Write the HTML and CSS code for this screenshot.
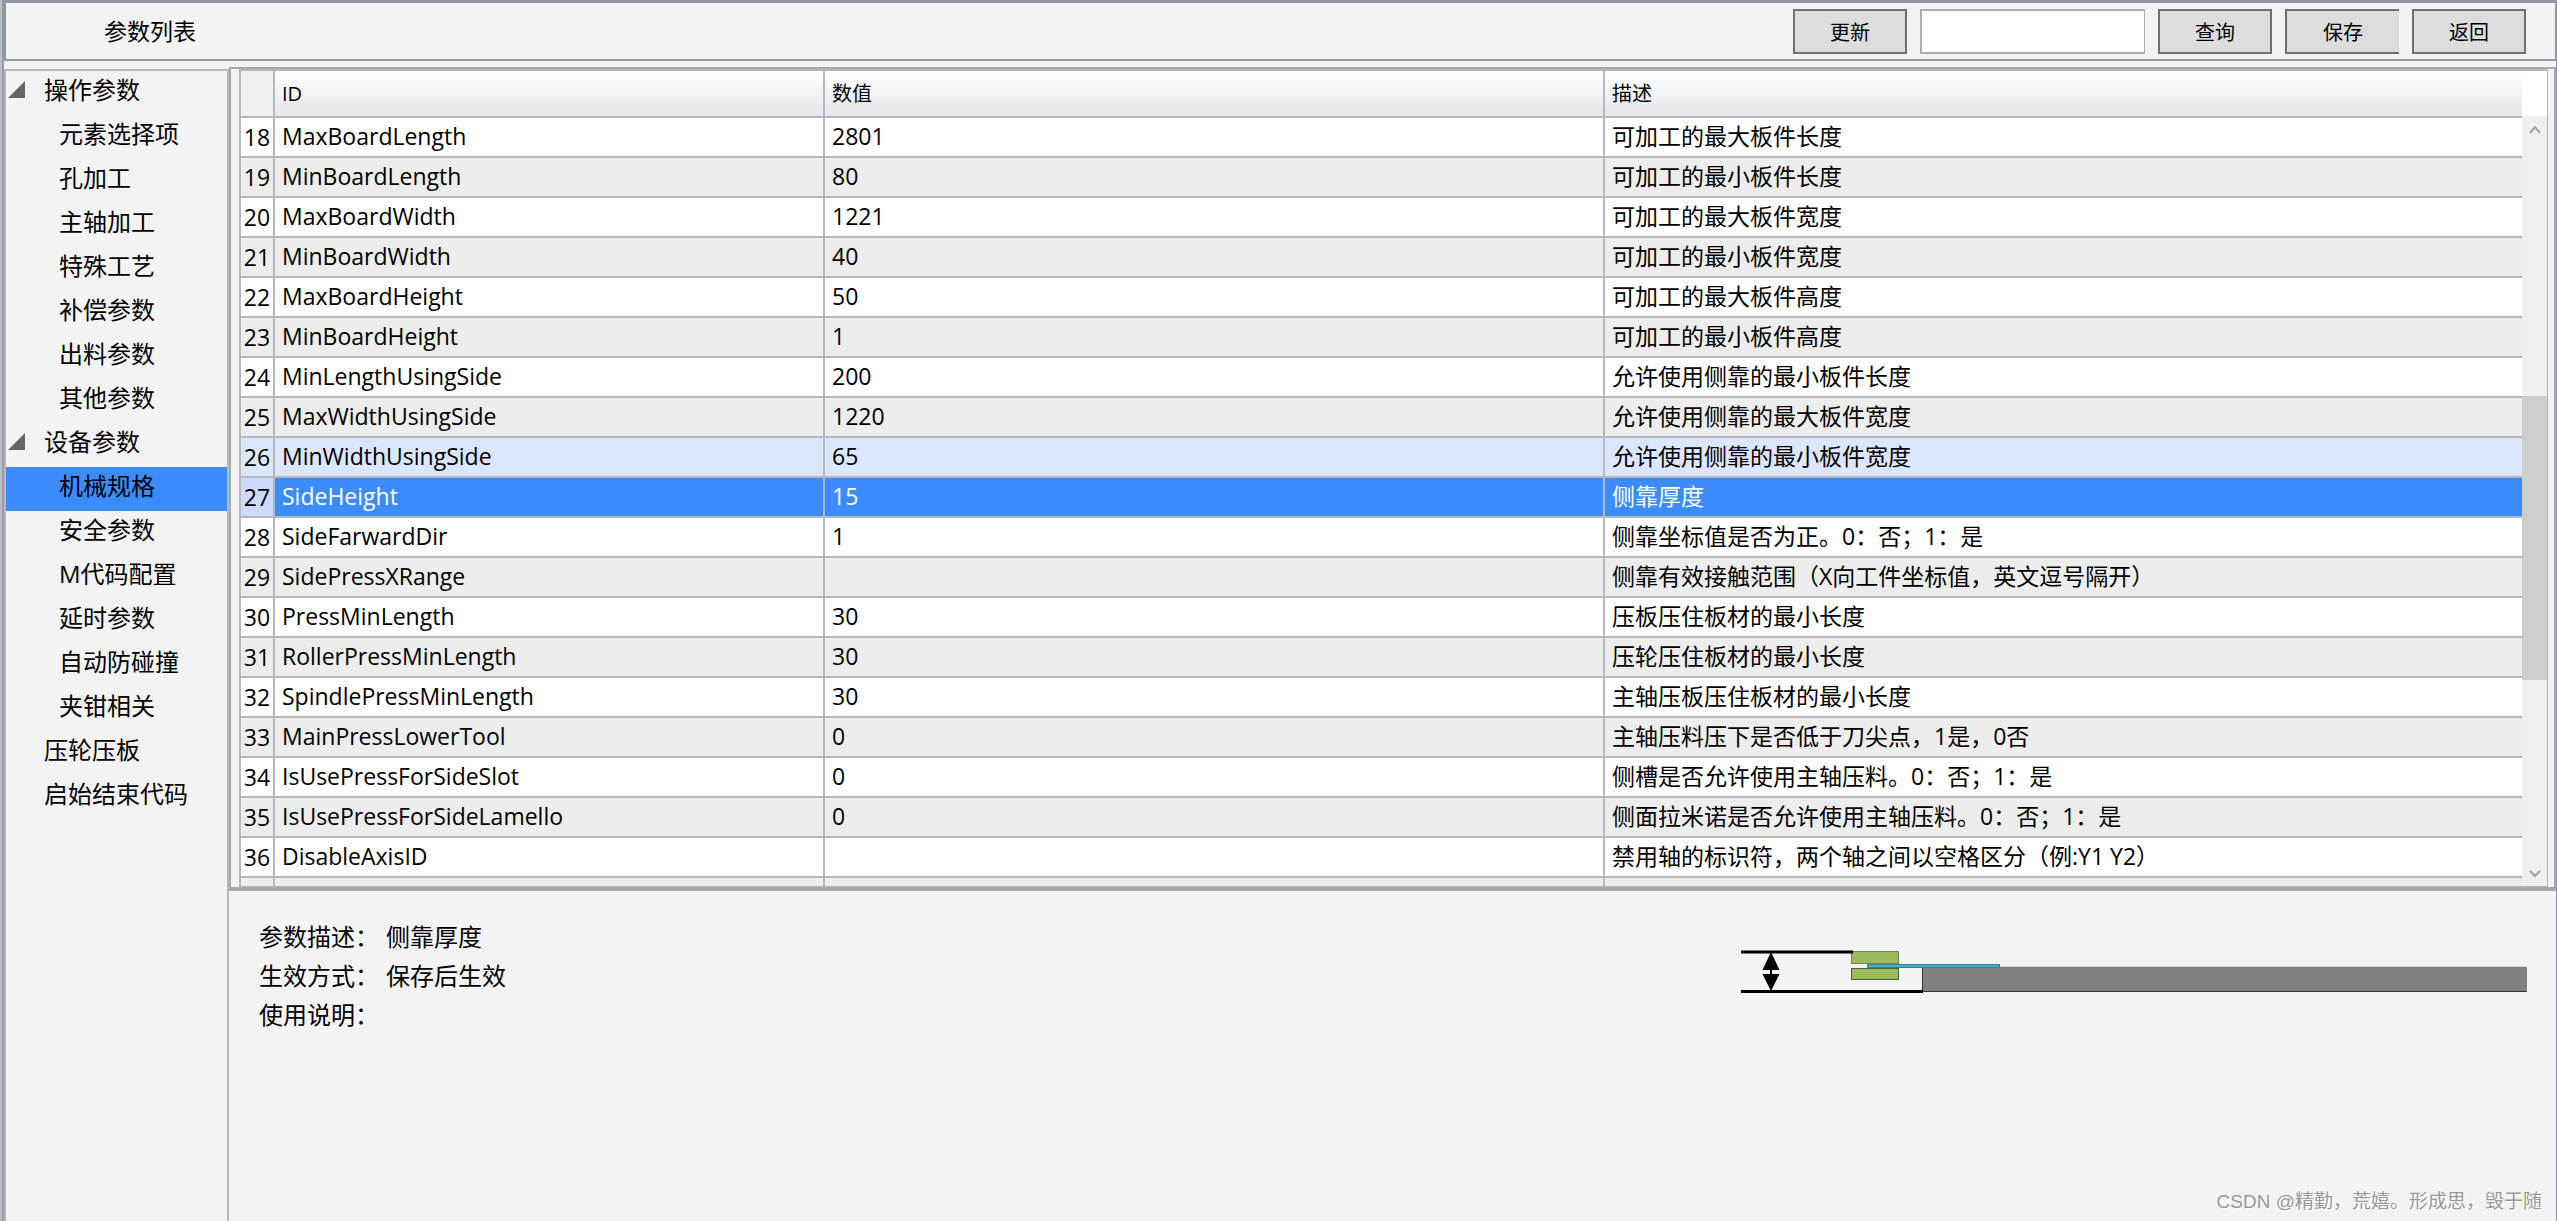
FILE: index.html
```html
<!DOCTYPE html>
<html lang="zh-CN">
<head>
<meta charset="utf-8">
<title>参数列表</title>
<link rel="stylesheet" href="styles.css">
</head>
<body>
<div class="app">
  <header class="titlebar">
    <h1 class="title">参数列表</h1>
    <div class="tools">
      <button class="btn" type="button">更新</button>
      <input class="search" type="text" aria-label="查询内容">
      <button class="btn" type="button">查询</button>
      <button class="btn btn-save" type="button">保存</button>
      <button class="btn" type="button">返回</button>
    </div>
  </header>
  <div class="body">
    <nav class="sidebar" aria-label="参数分类">
      <ul class="tree">
        <li><a class="node open" href="#">操作参数</a>
          <ul class="tree">
            <li><a class="node child" href="#">元素选择项</a></li>
            <li><a class="node child" href="#">孔加工</a></li>
            <li><a class="node child" href="#">主轴加工</a></li>
            <li><a class="node child" href="#">特殊工艺</a></li>
            <li><a class="node child" href="#">补偿参数</a></li>
            <li><a class="node child" href="#">出料参数</a></li>
            <li><a class="node child" href="#">其他参数</a></li>
          </ul>
        </li>
        <li><a class="node open" href="#">设备参数</a>
          <ul class="tree">
            <li><a class="node child current" href="#" aria-current="page">机械规格</a></li>
            <li><a class="node child" href="#">安全参数</a></li>
            <li><a class="node child" href="#">M代码配置</a></li>
            <li><a class="node child" href="#">延时参数</a></li>
            <li><a class="node child" href="#">自动防碰撞</a></li>
            <li><a class="node child" href="#">夹钳相关</a></li>
          </ul>
        </li>
        <li><a class="node" href="#">压轮压板</a></li>
        <li><a class="node" href="#">启始结束代码</a></li>
      </ul>
    </nav>
    <main class="main">
      <section class="grid-panel">
        <div class="grid">
          <div class="viewport">
            <table class="params">
              <colgroup><col class="c-num"><col class="c-id"><col class="c-value"><col class="c-desc"></colgroup>
              <thead>
                <tr><td class="corner"></td><th scope="col">ID</th><th scope="col">数值</th><th scope="col">描述</th></tr>
              </thead>
              <tbody>
                <tr><th scope="row">18</th><td>MaxBoardLength</td><td>2801</td><td>可加工的最大板件长度</td></tr>
                <tr><th scope="row">19</th><td>MinBoardLength</td><td>80</td><td>可加工的最小板件长度</td></tr>
                <tr><th scope="row">20</th><td>MaxBoardWidth</td><td>1221</td><td>可加工的最大板件宽度</td></tr>
                <tr><th scope="row">21</th><td>MinBoardWidth</td><td>40</td><td>可加工的最小板件宽度</td></tr>
                <tr><th scope="row">22</th><td>MaxBoardHeight</td><td>50</td><td>可加工的最大板件高度</td></tr>
                <tr><th scope="row">23</th><td>MinBoardHeight</td><td>1</td><td>可加工的最小板件高度</td></tr>
                <tr><th scope="row">24</th><td>MinLengthUsingSide</td><td>200</td><td>允许使用侧靠的最小板件长度</td></tr>
                <tr><th scope="row">25</th><td>MaxWidthUsingSide</td><td>1220</td><td>允许使用侧靠的最大板件宽度</td></tr>
                <tr class="hover"><th scope="row">26</th><td>MinWidthUsingSide</td><td>65</td><td>允许使用侧靠的最小板件宽度</td></tr>
                <tr class="selected"><th scope="row">27</th><td>SideHeight</td><td>15</td><td>侧靠厚度</td></tr>
                <tr><th scope="row">28</th><td>SideFarwardDir</td><td>1</td><td>侧靠坐标值是否为正。0：否；1：是</td></tr>
                <tr><th scope="row">29</th><td>SidePressXRange</td><td></td><td>侧靠有效接触范围（X向工件坐标值，英文逗号隔开）</td></tr>
                <tr><th scope="row">30</th><td>PressMinLength</td><td>30</td><td>压板压住板材的最小长度</td></tr>
                <tr><th scope="row">31</th><td>RollerPressMinLength</td><td>30</td><td>压轮压住板材的最小长度</td></tr>
                <tr><th scope="row">32</th><td>SpindlePressMinLength</td><td>30</td><td>主轴压板压住板材的最小长度</td></tr>
                <tr><th scope="row">33</th><td>MainPressLowerTool</td><td>0</td><td>主轴压料压下是否低于刀尖点，1是，0否</td></tr>
                <tr><th scope="row">34</th><td>IsUsePressForSideSlot</td><td>0</td><td>侧槽是否允许使用主轴压料。0：否；1：是</td></tr>
                <tr><th scope="row">35</th><td>IsUsePressForSideLamello</td><td>0</td><td>侧面拉米诺是否允许使用主轴压料。0：否；1：是</td></tr>
                <tr><th scope="row">36</th><td>DisableAxisID</td><td></td><td>禁用轴的标识符，两个轴之间以空格区分（例:Y1 Y2）</td></tr>
                <tr><th scope="row"></th><td></td><td></td><td></td></tr>
              </tbody>
            </table>
          </div>
          <div class="scrollbar" aria-hidden="true">
            <div class="scroll-head"></div>
            <svg class="arrow" viewBox="0 0 25 26"><path d="M8 17 L13 11 L18 17" fill="none" stroke="#a3a3a3" stroke-width="2"/></svg>
            <div class="track">
              <div class="before"></div>
              <div class="thumb"></div>
              <div class="after"></div>
            </div>
            <svg class="arrow" viewBox="0 0 25 26"><path d="M8 11 L13 16 L18 11" fill="none" stroke="#a3a3a3" stroke-width="2"/></svg>
          </div>
        </div>
      </section>
      <section class="detail">
        <dl class="info">
          <dt>参数描述：</dt><dd>侧靠厚度</dd>
          <dt>生效方式：</dt><dd>保存后生效</dd>
          <dt>使用说明：</dt><dd></dd>
        </dl>
        <svg class="diagram" viewBox="0 0 787 46" role="img" aria-label="侧靠厚度示意图">
          <rect x="181" y="19" width="605" height="25" fill="#808080"/>
          <path d="M181 18.500H786" stroke="#d3d3d3"/>
          <path d="M181.500 19V43.500H786" fill="none" stroke="#333"/>
          <rect x="110.500" y="3.500" width="47" height="12" fill="#9bbb5f" stroke="#71893f"/>
          <rect x="110.500" y="20.500" width="47" height="11" fill="#9bbb5f" stroke="#4c6030"/>
          <rect x="126.500" y="16.500" width="132" height="3" fill="#4bacc6" stroke="#31849b"/>
          <path d="M0 4H112M0 43.500H182" stroke="#000" stroke-width="3"/>
          <path d="M30 4L38.500 22H31V26H38.500L30 43L21.500 26H29V22H21.500Z" fill="#000"/>
        </svg>
      </section>
    </main>
  </div>
  <p class="watermark">CSDN @精勤，荒嬉。形成思，毁于随</p>
</div>
</body>
</html>
```
FILE: styles.css
```css
* { box-sizing: border-box; }

body {
  margin: 0;
  background: #f3f3f3;
  color: #000;
  font-family: "Open Sans", "Noto Sans CJK SC", sans-serif;
  font-size: 23px;
}

ul, dl, dd, p, h1 { margin: 0; padding: 0; }

.app {
  display: flex;
  flex-direction: column;
  height: 100vh;
  border-left: 2px solid #b9bdc4;
  border-right: 1px solid #8f97a8;
  overflow: hidden;
}

.titlebar {
  display: flex;
  align-items: center;
  justify-content: space-between;
  height: 61px;
  padding: 0 29px 0 98px;
  border: 2px solid #9198a4;
  border-top-width: 3px;
  border-right-width: 1px;
  border-left-width: 4px;
}

.title {
  font-size: 23px;
  font-weight: 400;
  line-height: 32px;
}

.tools {
  display: flex;
  gap: 13px;
}

.btn {
  width: 114px;
  height: 45px;
  padding: 0;
  border: 2px solid #707070;
  background: #ddd;
  color: #000;
  font: inherit;
  font-size: 20px;
}

.btn-save { border-right: 0; }

.search {
  width: 225px;
  height: 45px;
  padding: 0 8px;
  border: 2px solid #abadb3;
  border-right-width: 1px;
  background: #fff;
  font: inherit;
}

.body {
  flex: 1;
  display: flex;
  min-height: 0;
  border-left: 2px solid #959ca8;
}

.sidebar {
  width: 225px;
  margin-top: 8px;
  border: 2px solid #b8b8b8;
  border-bottom: 0;
}

.tree { list-style: none; }

.node {
  display: block;
  position: relative;
  height: 44px;
  padding-left: 38px;
  color: #000;
  font-size: 24px;
  line-height: 38px;
  text-decoration: none;
}

.child { padding-left: 53px; }

.current { background: #3b8cff; }

.open::before {
  content: "";
  position: absolute;
  left: 2px;
  top: 10px;
  width: 17px;
  height: 17px;
  background: #65655f;
  clip-path: polygon(100% 0, 100% 100%, 0 100%);
}

.main {
  flex: 1;
  display: grid;
  grid-template-rows: 5fr 2fr;
  min-width: 0;
  margin-top: 6px;
}

.grid-panel {
  min-height: 0;
  padding: 0 6px 0 8px;
  border: 2px solid #a9a9a9;
  border-bottom-width: 4px;
}

.grid {
  display: flex;
  height: 100%;
  border: 2px solid #b4b8bd;
  border-right-width: 1px;
  border-bottom-width: 1px;
}

.viewport {
  flex: 1;
  min-width: 0;
  overflow: hidden;
}

.params {
  width: 100%;
  border-collapse: separate;
  border-spacing: 0;
  table-layout: fixed;
  background: #fff;
}

.c-num { width: 34px; }
.c-id { width: 550px; }
.c-value { width: 780px; }

.params td,
.params th {
  height: 40px;
  padding: 0 0 2px 7px;
  border-right: 2px solid #b5b9bf;
  border-bottom: 2px solid #b5b9bf;
  font-weight: 400;
  line-height: 36px;
  text-align: left;
  white-space: nowrap;
}

.params td:last-child,
.params th:last-child {
  border-right: 0;
}

.params thead th,
.params thead td {
  height: 47px;
  padding-bottom: 0;
  background: linear-gradient(#fff, #e3e7eb);
  font-size: 20px;
  line-height: 45px;
}

.params thead .corner { background: #f0f0f0; }

.params tbody th {
  padding: 0;
  line-height: 38px;
  text-align: center;
}

.params tbody tr:nth-child(even) { background: #ededed; }
.params tbody .hover { background: #dce6ff; }
.params tbody .selected:nth-child(even) { background: #3b8cff; }
.selected td { color: #fff; }
.selected th { background: #cddaff; }

.scrollbar {
  display: flex;
  flex-direction: column;
  width: 25px;
  background: #f0f0f0;
}

.scroll-head {
  height: 45px;
  background: #fff;
}

.arrow {
  display: block;
  width: 25px;
  height: 26px;
}

.track {
  flex: 1;
  display: flex;
  flex-direction: column;
}

.before { flex: 254; }
.thumb { flex: 284; background: #cdcdcd; }
.after { flex: 180; }

.detail {
  display: flex;
  align-items: flex-start;
  justify-content: space-between;
  padding: 26px 28px 0 30px;
}

.info {
  display: grid;
  grid-template-columns: 127px 1fr;
  font-size: 24px;
  line-height: 39px;
}

.diagram {
  width: 787px;
  height: 46px;
  margin-top: 31px;
}

.watermark {
  position: absolute;
  right: 15px;
  bottom: 4px;
  color: #999;
  font-family: "Liberation Sans", "Noto Sans CJK SC", sans-serif;
  font-size: 19px;
  line-height: 30px;
  text-shadow: 1px 1px 0 #fff;
}
```
